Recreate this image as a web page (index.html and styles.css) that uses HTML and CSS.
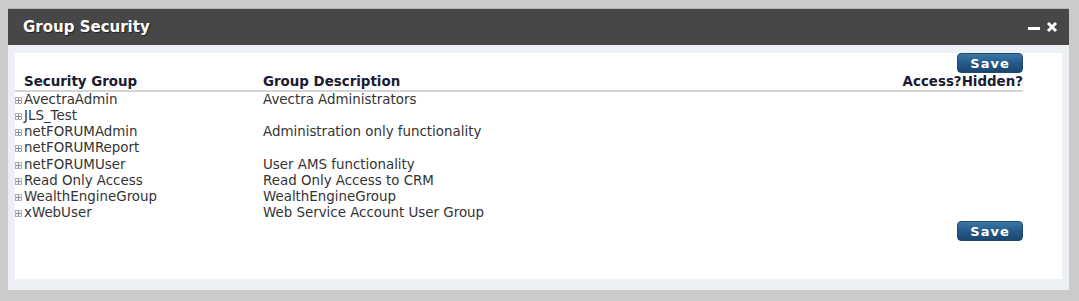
FILE: index.html
```html
<!DOCTYPE html>
<html lang="en">
<head>
    <meta charset="UTF-8">
    <title>Group Security</title>
    <link rel="stylesheet" href="styles.css">
</head>
<body>
    <div class="window">
        <div class="title-bar">
            <span class="title">Group Security</span>
            <span class="win-icons">
                <svg width="12" height="12" viewBox="0 0 12 12"><rect x="0" y="6" width="12" height="3" fill="#fff"/></svg>
                <svg width="12" height="12" viewBox="0 0 12 12"><path d="M2 2 L10 10 M10 2 L2 10" stroke="#fff" stroke-width="3"/></svg>
            </span>
        </div>
        <div class="window-body">
            <div class="panel">
                <div class="button-row"><button class="save">Save</button></div>
                <table class="groups">
                    <thead>
                        <tr>
                            <th class="col-name">Security Group</th>
                            <th class="col-desc">Group Description</th>
                            <th class="col-flag">Access?</th>
                            <th class="col-flag">Hidden?</th>
                        </tr>
                    </thead>
                    <tbody>
                        <tr><td><span class="expand"></span>AvectraAdmin</td><td>Avectra Administrators</td><td></td><td></td></tr>
                        <tr><td><span class="expand"></span>JLS_Test</td><td></td><td></td><td></td></tr>
                        <tr><td><span class="expand"></span>netFORUMAdmin</td><td>Administration only functionality</td><td></td><td></td></tr>
                        <tr><td><span class="expand"></span>netFORUMReport</td><td></td><td></td><td></td></tr>
                        <tr><td><span class="expand"></span>netFORUMUser</td><td>User AMS functionality</td><td></td><td></td></tr>
                        <tr><td><span class="expand"></span>Read Only Access</td><td>Read Only Access to CRM</td><td></td><td></td></tr>
                        <tr><td><span class="expand"></span>WealthEngineGroup</td><td>WealthEngineGroup</td><td></td><td></td></tr>
                        <tr><td><span class="expand"></span>xWebUser</td><td>Web Service Account User Group</td><td></td><td></td></tr>
                    </tbody>
                </table>
                <div class="button-row"><button class="save">Save</button></div>
            </div>
        </div>
    </div>
</body>
</html>
```

FILE: styles.css
```css
body {
    margin: 0;
    padding: 8px;
    background-color: #cbcbcb;
    font-family: "DejaVu Sans", Verdana, sans-serif;
    font-size: 13.4px;
    color: #333333;
}

.window {
    width: 1061px;
    border-top: 1px solid #b5b5b5;
}

.title-bar {
    display: flex;
    align-items: center;
    justify-content: space-between;
    height: 36px;
    padding: 0 11px 0 15px;
    background-color: #474747;
    color: #ffffff;
}

.title {
    font-size: 15px;
    font-weight: bold;
    text-shadow: 1px 1px 1px #222222;
}

.win-icons {
    display: flex;
    gap: 6px;
    align-items: center;
}

.window-body {
    background-color: #edf0f4;
    padding: 8px 7px 11px 7px;
}

.panel {
    background-color: #ffffff;
    padding: 0 39px 38px 0;
    min-height: 188px;
    box-sizing: border-box;
}

.button-row {
    display: flex;
    justify-content: flex-end;
}

.save {
    width: 66px;
    height: 20px;
    border: 1px solid #1e4a6e;
    border-radius: 4px;
    background: linear-gradient(#3a77a6, #235887 55%, #1a4770);
    color: #ffffff;
    font-family: "DejaVu Sans", Verdana, sans-serif;
    font-size: 13px;
    font-weight: bold;
    letter-spacing: 1px;
    padding: 0;
    cursor: pointer;
}

.groups {
    width: 100%;
    border-collapse: collapse;
}

.groups th {
    font-size: 13.4px;
    font-weight: bold;
    color: #1b1b33;
    text-align: left;
    padding: 0;
    border-bottom: 2px solid #d5d5d5;
    line-height: 17px;
}

.groups th.col-name {
    padding-left: 9px;
    width: 239px;
}

.groups th.col-flag {
    text-align: right;
    width: 1px;
    white-space: nowrap;
}

.groups td {
    padding: 0;
    line-height: 16.15px;
    height: 16.15px;
    white-space: nowrap;
}

.expand {
    display: inline-block;
    width: 7px;
    height: 7px;
    margin-right: 2px;
    background:
        linear-gradient(#8a8a9a, #8a8a9a) center / 5px 1px no-repeat,
        linear-gradient(#8a8a9a, #8a8a9a) center / 1px 5px no-repeat;
    border: 1px solid #b0b0c0;
    box-sizing: border-box;
    vertical-align: 0;
}
```
